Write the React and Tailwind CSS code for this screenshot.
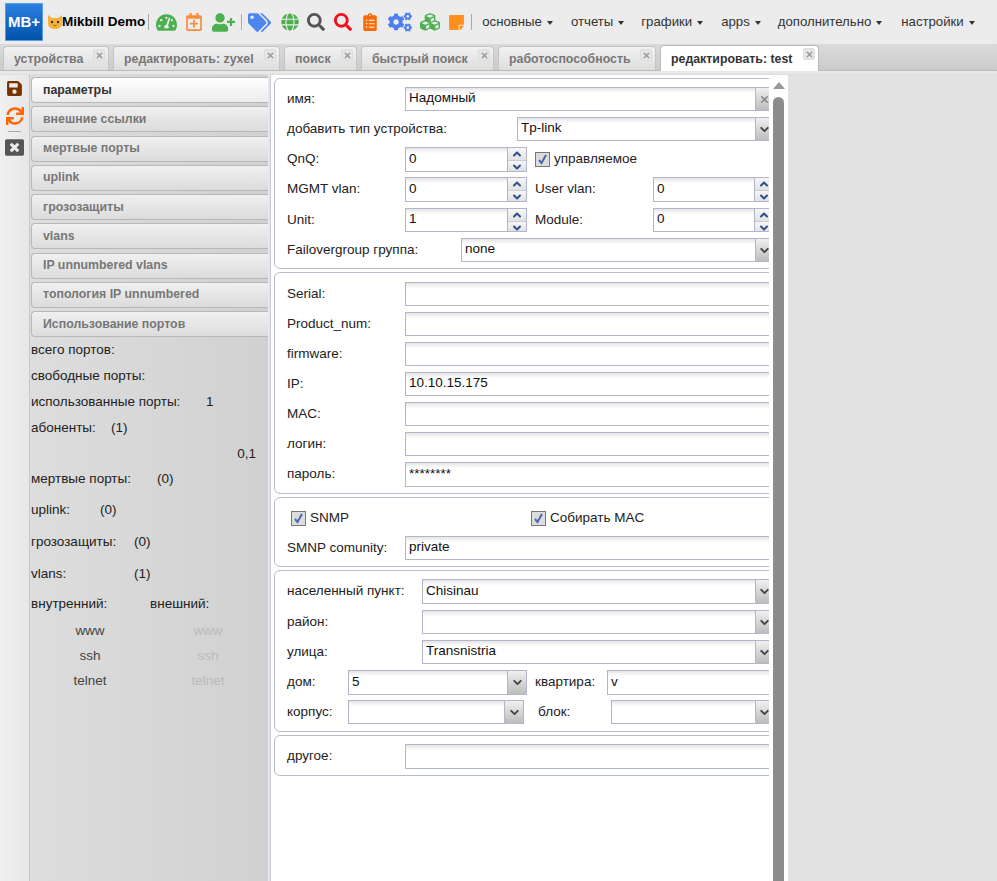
import React from 'react';
import { ChevronDown, ChevronUp, X } from 'lucide-react';
import {
  FaTachometerAlt, FaRegCalendarPlus, FaUserPlus, FaTags, FaGlobe, FaSearch,
  FaClipboardList, FaCogs, FaCubes, FaStickyNote, FaSave, FaSync, FaWindowClose,
} from 'react-icons/fa';

const fieldBox = 'flex items-center h-full px-[3px] pb-[1px] border border-[#b2b6ca] bg-white shadow-[inset_0_5px_4px_-3px_rgba(0,0,0,0.13)] text-[#111] text-[13.5px] overflow-hidden';

const Separator = ({ className }) => <div className={`w-px h-[16px] bg-[#aaa] ${className}`} />;

const Cat = () => (
  <svg width="16" height="16" viewBox="0 0 16 16">
    <path d="M1 1l4 3h6l4-3v8c0 4-3 6-7 6s-7-2-7-6z" fill="#f7b23b" />
    <circle cx="5" cy="8" r="1.2" fill="#333" />
    <circle cx="11" cy="8" r="1.2" fill="#333" />
    <path d="M6.5 11c1 1 2 1 3 0" stroke="#8a4b00" strokeWidth="1" fill="none" />
  </svg>
);

const MenuItem = ({ label, className }) => (
  <div className={`flex items-center gap-[5px] text-[13.2px] text-[#333] ${className}`}>
    <span>{label}</span>
    <span className="w-0 h-0 mt-[2px] border-x-[3px] border-x-transparent border-t-[4px] border-t-[#333]" />
  </div>
);

const TopBar = () => (
  <div className="flex items-center h-[44px] bg-[#ececec] pl-[5px]">
    <div className="flex items-center justify-center w-[38px] h-[38px] border border-[#5a9be8] bg-gradient-to-b from-[#2b80e2] to-[#0052a9] text-white font-bold text-[15px]">MB+</div>
    <div className="ml-[4px]"><Cat /></div>
    <span className="-ml-px font-bold text-[13.5px] text-black">Mikbill Demo</span>
    <Separator className="ml-[3px]" />
    <FaTachometerAlt className="ml-[7px] text-[#4caf50]" size={21} />
    <FaRegCalendarPlus className="ml-[8px] text-[#fb8c3c]" size={18} />
    <FaUserPlus className="ml-[9px] text-[#4caf50]" size={23} />
    <Separator className="ml-[6px]" />
    <FaTags className="ml-[6px] text-[#4d86f0]" size={23} />
    <FaGlobe className="ml-[10px] text-[#4caf50]" size={18} />
    <FaSearch className="ml-[8px] text-[#555]" size={18} />
    <FaSearch className="ml-[9px] text-[#f5121c]" size={18} />
    <FaClipboardList className="ml-[9px] text-[#ff6a00]" size={18} />
    <FaCogs className="ml-[9px] text-[#4d7ff0]" size={24} />
    <FaCubes className="ml-[8px] text-[#4caf50]" size={20} />
    <FaStickyNote className="ml-[8px] text-[#ff9020]" size={17} />
    <Separator className="ml-[6px]" />
    <MenuItem label="основные" className="ml-[10px]" />
    <MenuItem label="отчеты" className="ml-[18px]" />
    <MenuItem label="графики" className="ml-[17px]" />
    <MenuItem label="apps" className="ml-[18px]" />
    <MenuItem label="дополнительно" className="ml-[17px]" />
    <MenuItem label="настройки" className="ml-[19px]" />
  </div>
);

const Tab = ({ label, active, className }) => (
  <div className={`relative flex items-center pl-[10px] pt-px border border-b-0 rounded-t-[4px] font-bold text-[12.35px] ${active ? 'h-[26px] bg-white border-[#bbb] text-[#333]' : 'h-[24px] bg-gradient-to-b from-[#f2f2f2] to-[#dedede] border-[#c4c4c4] text-[#777]'} ${className}`}>
    {label}
    <span className="absolute top-[2px] right-[3px] flex items-center justify-center w-[12px] h-[12px] rounded-[2px] border border-[#ddd] bg-[#e6e6e6]">
      <X size={9} strokeWidth={4} className="text-[#999]" />
    </span>
  </div>
);

const TabBar = () => (
  <div className="flex items-end h-[27px] pl-[3px] gap-[4px] bg-gradient-to-b from-[#dadada] to-[#cbcbcb] border-b border-[#bbb]">
    <Tab label="устройства" className="w-[106px]" />
    <Tab label="редактировать: zyxel" className="w-[167px]" />
    <Tab label="поиск" className="w-[73px]" />
    <Tab label="быстрый поиск" className="w-[133px]" />
    <Tab label="работоспособность" className="w-[158px]" />
    <Tab label="редактировать: test" active className="w-[159px] -mb-px" />
  </div>
);

const Rail = () => (
  <div className="flex flex-col items-center w-[29px] pt-[5px] bg-gradient-to-r from-[#f0f0f0] to-[#e7e7e7]">
    <FaSave size={17} className="text-[#7a3200]" />
    <FaSync size={18} className="mt-[10px] text-[#ff6600]" />
    <div className="w-[13px] h-px mt-[6px] bg-[#aaa]" />
    <FaWindowClose size={19} className="mt-[6px] text-[#555]" />
  </div>
);

const NavButton = ({ label, active }) => (
  <div className={`flex items-center h-[26px] pl-[11px] border border-r-0 border-[#b8b8b8] rounded-l-[4px] font-bold text-[12.35px] ${active ? 'bg-gradient-to-b from-white to-[#ececec] text-[#333]' : 'bg-gradient-to-b from-[#f0f0f0] to-[#dcdcdc] text-[#777]'}`}>
    {label}
  </div>
);

const Stat = ({ label, value, valueClass, className = 'h-[26px]' }) => (
  <div className={`flex items-center text-[13.5px] text-[#222] ${className}`}>
    <span className={valueClass}>{label}</span>
    <span>{value}</span>
  </div>
);

const Access = ({ label }) => (
  <div className="flex items-center h-[25px] text-[13.5px]">
    <span className="w-[118px] text-center text-[#444]">{label}</span>
    <span className="w-[118px] text-center text-[#bbb]">{label}</span>
  </div>
);

const Sidebar = () => (
  <div className="w-[239px] pl-[1px] pt-[2px] bg-gradient-to-r from-[#dddddd] to-[#d1d1d1] border-l border-[#c8c8c8]">
    <div className="flex flex-col gap-[3.25px]">
      <NavButton label="параметры" active />
      <NavButton label="внешние ссылки" />
      <NavButton label="мертвые порты" />
      <NavButton label="uplink" />
      <NavButton label="грозозащиты" />
      <NavButton label="vlans" />
      <NavButton label="IP unnumbered vlans" />
      <NavButton label="топология IP unnumbered" />
      <NavButton label="Использование портов" />
    </div>
    <Stat label="всего портов:" />
    <Stat label="свободные порты:" />
    <Stat label="использованные порты:" value="1" valueClass="w-[175px]" />
    <Stat label="абоненты:" value="(1)" valueClass="w-[80px]" />
    <div className="flex items-center justify-end h-[26px] pr-[12px] text-[13.5px] text-[#222]">0,1</div>
    <Stat label="мертвые порты:" value="(0)" valueClass="w-[126px]" className="h-[25px] mb-[3px]" />
    <Stat label="uplink:" value="(0)" valueClass="w-[69px]" className="h-[31px]" />
    <Stat label="грозозащиты:" value="(0)" valueClass="w-[103px]" className="h-[32px]" />
    <Stat label="vlans:" value="(1)" valueClass="w-[103px]" className="h-[32px]" />
    <div className="flex items-center h-[29px] text-[13.5px] text-[#222]">
      <span className="w-[119px]">внутренний:</span>
      <span>внешний:</span>
    </div>
    <Access label="www" />
    <Access label="ssh" />
    <Access label="telnet" />
  </div>
);

const Field = ({ value, className = 'flex-1' }) => <div className={`${fieldBox} ${className}`}>{value}</div>;

const SideButton = ({ children, className = 'w-[18px]' }) => (
  <div className={`flex items-center justify-center shrink-0 self-stretch bg-gradient-to-b from-[#f0f0f0] to-[#bdbdbd] ${className}`}>
    {children}
  </div>
);

const Select = ({ value, className = 'flex-1', wide }) => (
  <div className={`${fieldBox} !pr-0 !pb-0 ${className}`}>
    <span className="flex-1 pb-[1px]">{value}</span>
    <SideButton className={wide ? 'w-[19px] border-l border-[#b2b6ca]' : 'w-[18px] border-l border-[#b2b6ca]'}>
      <ChevronDown size={13} strokeWidth={3.5} className="text-[#444]" />
    </SideButton>
  </div>
);

const Spinner = ({ value, className }) => (
  <div className={`${fieldBox} !pr-0 !pb-0 ${className}`}>
    <span className="flex-1 pb-[1px]">{value}</span>
    <div className="flex flex-col shrink-0 self-stretch w-[19px] border-l border-[#b2b6ca]">
      <div className="flex flex-1 items-center justify-center bg-gradient-to-b from-[#f6f6f6] to-[#e2e2e2] border-b border-[#c8ccd8]">
        <ChevronUp size={12} strokeWidth={4} className="text-[#2f4f8f]" />
      </div>
      <div className="flex flex-1 items-center justify-center bg-gradient-to-b from-[#f6f6f6] to-[#dcdcdc]">
        <ChevronDown size={12} strokeWidth={4} className="text-[#2f4f8f]" />
      </div>
    </div>
  </div>
);

const Check = () => (
  <span className="flex items-center justify-center w-[15px] h-[15px] border border-[#777] bg-[#dcdcdc]">
    <svg width="11" height="11" viewBox="0 0 11 11">
      <path d="M2 6l2.5 3L9 1" fill="none" stroke="#4a68b0" strokeWidth="2" />
    </svg>
  </span>
);

const Label = ({ children, className = 'w-[118px]' }) => <span className={`shrink-0 ${className}`}>{children}</span>;

const Row = ({ children, className = 'h-6 mb-[6px]' }) => (
  <div className={`flex items-center ${className}`}>{children}</div>
);

const Fieldset = ({ children, className = 'pt-[8px]' }) => (
  <div className={`w-[504px] mb-[3px] pl-[12px] pr-[3px] border border-[#b8bbcc] rounded-[6px] text-[13.5px] text-[#222] ${className}`}>
    {children}
  </div>
);

const TextRow = ({ label, value, className }) => (
  <Row className={className}>
    <Label>{label}</Label>
    <Field value={value} />
  </Row>
);

const Form = () => (
  <div className="w-[498px] h-full pt-[3px] pl-[3px] overflow-hidden">
    <Fieldset>
      <Row>
        <Label>имя:</Label>
        <div className="flex flex-1 h-full">
          <Field value="Надомный" />
        </div>
        <SideButton className="w-[18px] h-6 border border-l-0 border-[#b2b6ca]">
          <X size={11} strokeWidth={3.5} className="text-[#888]" />
        </SideButton>
      </Row>
      <Row>
        <Label className="w-[230px]">добавить тип устройства:</Label>
        <Select value="Tp-link" />
      </Row>
      <Row className="h-[25px] mb-[5px]">
        <Label>QnQ:</Label>
        <Spinner value="0" className="w-[122px]" />
        <span className="flex items-center gap-[4px] ml-[8px]"><Check />управляемое</span>
      </Row>
      <Row className="h-[25px] mb-[6px]">
        <Label>MGMT vlan:</Label>
        <Spinner value="0" className="w-[122px]" />
        <Label className="w-[118px] ml-[8px]">User vlan:</Label>
        <Spinner value="0" className="flex-1" />
      </Row>
      <Row>
        <Label>Unit:</Label>
        <Spinner value="1" className="w-[122px]" />
        <Label className="w-[118px] ml-[8px]">Module:</Label>
        <Spinner value="0" className="flex-1" />
      </Row>
      <Row>
        <Label className="w-[174px]">Failovergroup группа:</Label>
        <Select value="none" />
      </Row>
    </Fieldset>
    <Fieldset className="pt-[9px]">
      <TextRow label="Serial:" />
      <TextRow label="Product_num:" />
      <TextRow label="firmware:" />
      <TextRow label="IP:" value="10.10.15.175" />
      <TextRow label="MAC:" />
      <TextRow label="логин:" />
      <TextRow label="пароль:" value="********" className="h-[25px] mb-[6px]" />
    </Fieldset>
    <Fieldset className="pt-[12px]">
      <Row className="h-[16px] mb-[10px]">
        <span className="flex items-center gap-[4px] w-[240px] ml-[4px]"><Check />SNMP</span>
        <span className="flex items-center gap-[4px]"><Check />Собирать MAC</span>
      </Row>
      <TextRow label="SMNP comunity:" value="private" />
    </Fieldset>
    <Fieldset>
      <Row className="h-[25px] mb-[6px]">
        <Label className="w-[135px]">населенный пункт:</Label>
        <Select value="Chisinau" />
      </Row>
      <Row>
        <Label className="w-[135px]">район:</Label>
        <Select />
      </Row>
      <Row>
        <Label className="w-[135px]">улица:</Label>
        <Select value="Transnistria" />
      </Row>
      <Row className="h-[25px] mb-[5px]">
        <Label className="w-[61px]">дом:</Label>
        <Select value="5" className="w-[179px]" wide />
        <Label className="w-[72px] ml-[8px]">квартира:</Label>
        <Field value="v" />
      </Row>
      <Row className="h-6 mb-[7px]">
        <Label className="w-[61px]">корпус:</Label>
        <Select className="w-[176px]" wide />
        <Label className="w-[73px] ml-[14px]">блок:</Label>
        <Select />
      </Row>
    </Fieldset>
    <Fieldset>
      <Row className="h-[25px] mb-[6px]">
        <Label>другое:</Label>
        <Field />
      </Row>
    </Fieldset>
  </div>
);

const Scrollbar = () => (
  <div className="flex flex-col items-center w-[19px] pt-[7px]">
    <div className="w-0 h-0 border-x-[6.5px] border-x-transparent border-b-[7px] border-b-[#999]" />
    <div className="flex-1 w-[11px] mt-[8px] rounded-t-[6px] bg-[#8c8c8c]" />
  </div>
);

export default function App() {
  return (
    <div className="flex flex-col w-[997px] h-[881px] overflow-hidden font-['Liberation_Sans',Arial,sans-serif]">
      <TopBar />
      <TabBar />
      <div className="h-[4px] bg-[#e8e8e8] border-b border-[#ddd]" />
      <div className="flex flex-1 min-h-0 bg-[#e2e2e2]">
        <Rail />
        <Sidebar />
        <div className="w-[3px] bg-[#e6e6e6] border-r border-[#c8ccd8]" />
        <div className="flex bg-white">
          <Form />
          <Scrollbar />
        </div>
      </div>
    </div>
  );
}
